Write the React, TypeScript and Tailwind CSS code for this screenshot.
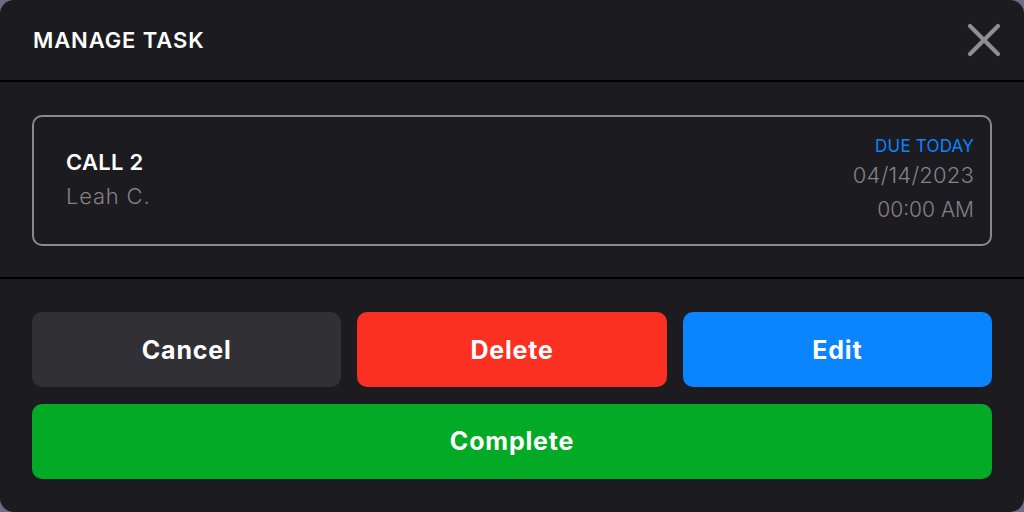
export default function App() {
  return (
    <div className="w-[1024px] h-[512px] bg-[#6e6c80]">
      <div
        className="w-full h-full rounded-[14px] bg-[#1c1b1f] overflow-hidden flex flex-col"
        style={{ fontFamily: "Inter, 'Noto Sans', sans-serif" }}
      >
        {/* header */}
        <div className="h-[80px] flex items-center justify-between pl-[33px] pr-[22px] shrink-0">
          <h1 className="text-white text-[22px] font-semibold tracking-[0.9px]">MANAGE TASK</h1>
          <button type="button" aria-label="Close" className="text-[#8e8e93]">
            <svg width="36" height="36" viewBox="0 0 36 36" fill="none" stroke="currentColor" strokeWidth="4.2" strokeLinecap="round">
              <path d="M4 4L32 32M32 4L4 32" />
            </svg>
          </button>
        </div>
        <div className="h-[2px] bg-black shrink-0" />

        {/* task card */}
        <div className="px-[32px] pt-[33px] pb-[31px] shrink-0">
          <div className="h-[131px] border-2 border-[#8a898e] rounded-[10px] flex justify-between pl-[32px] pr-[16px]">
            <div className="pt-[31px]">
              <div className="text-white text-[22px] font-semibold leading-[28px] tracking-[0.3px]">CALL 2</div>
              <div className="text-[#838287] text-[22px] font-light leading-[40px] tracking-[0.8px]">Leah C.</div>
            </div>
            <div className="pt-[17px] text-right">
              <div className="text-[#0a84ff] text-[17px] leading-[24px] tracking-[0.2px]">DUE TODAY</div>
              <div className="text-[#838287] text-[22px] font-light leading-[34px] tracking-[0.2px]">04/14/2023</div>
              <div className="text-[#838287] text-[21px] font-light leading-[36px]">00:00 AM</div>
            </div>
          </div>
        </div>
        <div className="h-[2px] bg-black shrink-0" />

        {/* actions */}
        <div className="px-[32px] pt-[33px] flex flex-col gap-[17px]">
          <div className="grid grid-cols-3 gap-[16px]">
            <button type="button" className="h-[75px] pt-[3px] rounded-[10px] bg-[#313034] text-white text-[25px] font-bold tracking-[0.8px]">
              Cancel
            </button>
            <button type="button" className="h-[75px] pt-[3px] rounded-[10px] bg-[#fb3021] text-white text-[25px] font-bold tracking-[0.8px]">
              Delete
            </button>
            <button type="button" className="h-[75px] pt-[3px] rounded-[10px] bg-[#0a84ff] text-white text-[25px] font-bold tracking-[0.8px]">
              Edit
            </button>
          </div>
          <button type="button" className="h-[75px] pt-[1px] rounded-[10px] bg-[#03aa25] text-white text-[25px] font-bold tracking-[0.8px]">
            Complete
          </button>
        </div>
      </div>
    </div>
  );
}
